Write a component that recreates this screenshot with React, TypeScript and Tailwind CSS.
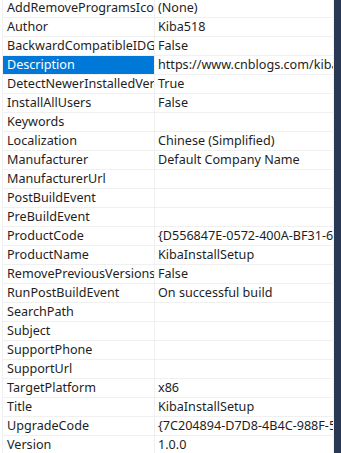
import React from "react";

const rows: [string, string][] = [
  ["AddRemoveProgramsIcon", "(None)"],
  ["Author", "Kiba518"],
  ["BackwardCompatibleIDGeneration", "False"],
  ["Description", "https://www.cnblogs.com/kiba/"],
  ["DetectNewerInstalledVersion", "True"],
  ["InstallAllUsers", "False"],
  ["Keywords", ""],
  ["Localization", "Chinese (Simplified)"],
  ["Manufacturer", "Default Company Name"],
  ["ManufacturerUrl", ""],
  ["PostBuildEvent", ""],
  ["PreBuildEvent", ""],
  ["ProductCode", "{D556847E-0572-400A-BF31-6A2B}"],
  ["ProductName", "KibaInstallSetup"],
  ["RemovePreviousVersions", "False"],
  ["RunPostBuildEvent", "On successful build"],
  ["SearchPath", ""],
  ["Subject", ""],
  ["SupportPhone", ""],
  ["SupportUrl", ""],
  ["TargetPlatform", "x86"],
  ["Title", "KibaInstallSetup"],
  ["UpgradeCode", "{7C204894-D7D8-4B4C-988F-5A1B}"],
  ["Version", "1.0.0"],
];

export default function App() {
  return (
    <div
      className="flex h-[453px] w-[341px] overflow-hidden bg-white text-[12.6px] text-[#1e1e1e]"
      style={{ fontFamily: '"Noto Sans", "Open Sans", sans-serif' }}
    >
      <div className="flex w-[334px] flex-col pl-[2px]">
        <div className="-mt-px flex flex-col border-l border-r border-[#f0f0f0]">
          {rows.map(([name, value]) => {
            const sel = name === "Description";
            return (
              <div key={name} className="flex h-[19px] shrink-0 border-b border-[#f0f0f0]">
                <div
                  className={`flex w-[152px] shrink-0 items-center overflow-hidden whitespace-nowrap border-r border-[#f0f0f0] pl-[4px] ${
                    sel ? "bg-[#0078d7] text-white" : ""
                  }`}
                >
                  {name}
                </div>
                <div className="flex min-w-0 flex-1 items-center overflow-hidden whitespace-nowrap pl-[3px]">
                  {value}
                </div>
              </div>
            );
          })}
        </div>
      </div>
      <div className="w-[7px] shrink-0 bg-[#293955]" />
    </div>
  );
}
